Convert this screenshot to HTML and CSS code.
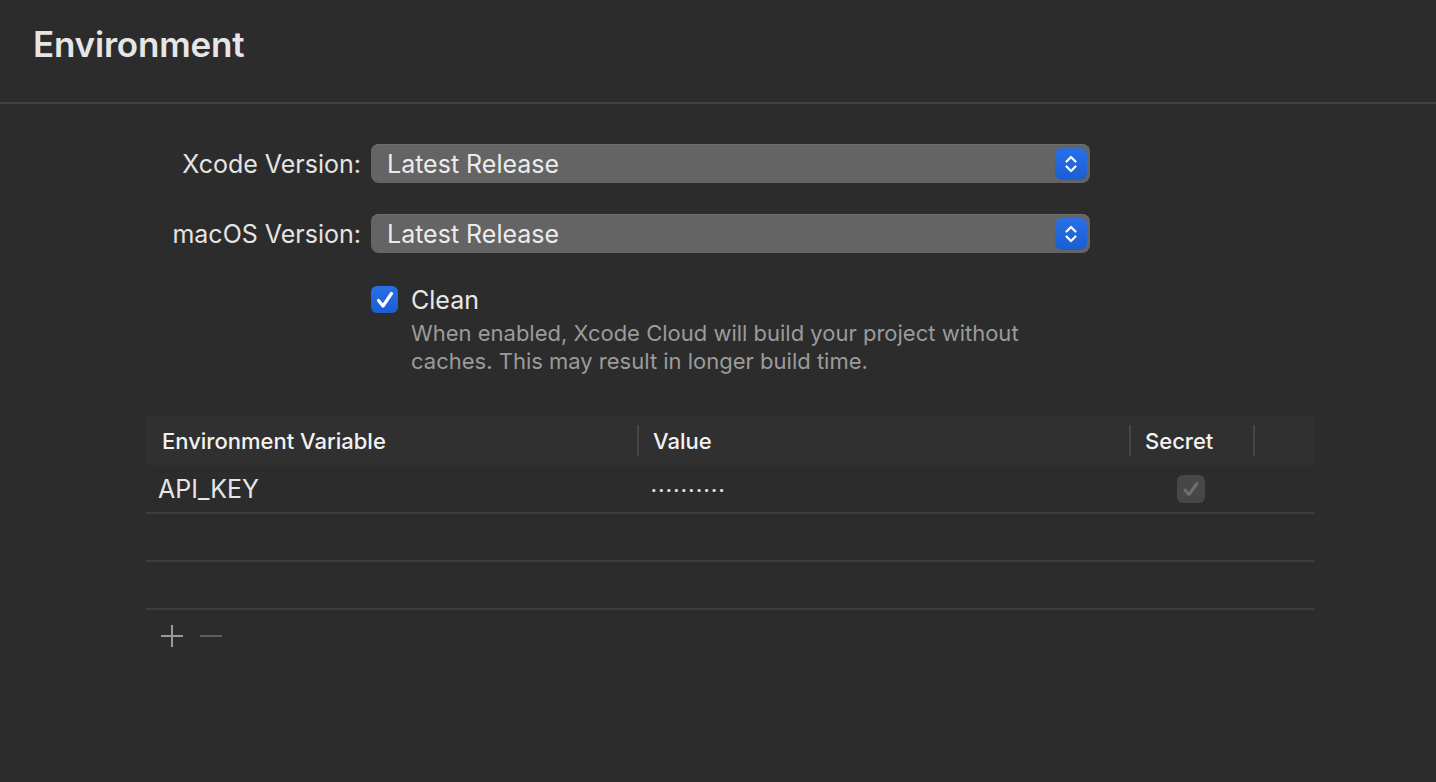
FILE: index.html
```html
<!DOCTYPE html>
<html lang="en">
<head>
  <meta charset="UTF-8" />
  <title>Environment</title>
  <link rel="stylesheet" href="styles.css">
</head>
<body>
  <!-- Header -->
  <div class="header">
    <h1>Environment</h1>
  </div>

  <!-- Version pickers -->
  <div class="form">
    <label class="form-label">Xcode Version:</label>
    <div class="popup">
      <span>Latest Release</span>
      <span class="stepper">
        <svg width="14" height="20" viewBox="0 0 14 20"><path d="M2.5 7.5 L7 3 L11.5 7.5 M2.5 12.5 L7 17 L11.5 12.5" fill="none" stroke="#fff" stroke-width="2.2" stroke-linecap="round" stroke-linejoin="round"/></svg>
      </span>
    </div>

    <label class="form-label">macOS Version:</label>
    <div class="popup">
      <span>Latest Release</span>
      <span class="stepper">
        <svg width="14" height="20" viewBox="0 0 14 20"><path d="M2.5 7.5 L7 3 L11.5 7.5 M2.5 12.5 L7 17 L11.5 12.5" fill="none" stroke="#fff" stroke-width="2.2" stroke-linecap="round" stroke-linejoin="round"/></svg>
      </span>
    </div>

    <div></div>
    <div class="option">
      <span class="checkbox">
        <svg width="22" height="22" viewBox="0 0 22 22"><path d="M4.5 11.5 L9 17 L17.5 4.5" fill="none" stroke="#fff" stroke-width="3.2" stroke-linecap="round" stroke-linejoin="round"/></svg>
      </span>
      <div>
        <div class="option-title">Clean</div>
        <p class="option-desc">When enabled, Xcode Cloud will build your project without<br>caches. This may result in longer build time.</p>
      </div>
    </div>
  </div>

  <!-- Variables table -->
  <div class="table">
    <div class="row head">
      <div class="cell c1">Environment Variable</div>
      <div class="cell c2">Value</div>
      <div class="cell c3">Secret</div>
      <div class="cell c4"></div>
    </div>
    <div class="row first">
      <div class="cell c1 name">API_KEY</div>
      <div class="cell c2 dots">••••••••••</div>
      <div class="cell c3 center">
        <span class="checkbox off">
          <svg width="22" height="22" viewBox="0 0 22 22"><path d="M5 12 L9 16.5 L17 5.5" fill="none" stroke="#6e6e6e" stroke-width="3" stroke-linecap="round" stroke-linejoin="round"/></svg>
        </span>
      </div>
      <div class="cell c4"></div>
    </div>
    <div class="row"></div>
    <div class="row"></div>
  </div>

  <div class="actions">
    <svg width="22" height="22" viewBox="0 0 22 22"><path d="M11 0 V22 M0 11 H22" stroke="#9a9a9a" stroke-width="2"/></svg>
    <svg width="22" height="22" viewBox="0 0 22 22"><path d="M0 11 H22" stroke="#5e5e5e" stroke-width="2"/></svg>
  </div>
</body>
</html>
```

FILE: styles.css
```css
* {
  box-sizing: border-box;
}
body {
  margin: 0;
  background: #2c2c2c;
  color: #e4e4e4;
  font-family: Inter, "Noto Sans", sans-serif;
  height: 100vh;
  overflow: hidden;
}
.header {
  height: 104px;
  padding: 23px 0 0 33px;
  border-bottom: 2px solid #404040;
}
.header h1 {
  margin: 0;
  font-size: 35px;
  font-weight: 600;
  color: #e6e6e6;
  letter-spacing: -0.2px;
}
.form {
  display: grid;
  grid-template-columns: 361px 719px;
  column-gap: 10px;
  row-gap: 31px;
  margin-top: 40px;
  align-items: center;
}
.form-label {
  text-align: right;
  font-size: 25px;
  color: #e4e4e4;
}
.popup {
  height: 39px;
  background: #646464;
  border-radius: 8px;
  display: flex;
  align-items: center;
  justify-content: space-between;
  padding: 0 3px 0 16px;
  font-size: 25px;
  color: #ececec;
  box-shadow: inset 0 1px 0 #6e6e6e;
}
.stepper {
  width: 32px;
  height: 32px;
  border-radius: 7px;
  background: linear-gradient(#2b6fe6, #1a5ed4);
  display: flex;
  align-items: center;
  justify-content: center;
}
.option {
  display: flex;
  gap: 13px;
  align-items: flex-start;
  margin-top: 2px;
}
.checkbox {
  flex: none;
  width: 27px;
  height: 27px;
  border-radius: 6px;
  background: linear-gradient(#2b6fe6, #1a5ed4);
  display: flex;
  align-items: center;
  justify-content: center;
}
.checkbox.off {
  width: 28px;
  height: 28px;
  background: #474747;
}
.option-title {
  font-size: 25px;
  line-height: 29px;
  color: #e8e8e8;
}
.option-desc {
  margin: 4px 0 0;
  font-size: 22px;
  line-height: 28px;
  color: #9b9b9b;
}
.table {
  margin: 41px 0 0 146px;
  width: 1169px;
}
.row {
  display: flex;
  height: 48px;
  border-bottom: 2px solid #3d3d3d;
}
.row.first {
  height: 49px;
}
.row.head {
  height: 49px;
  background: #303030;
  border-bottom: none;
}
.cell {
  display: flex;
  align-items: center;
  position: relative;
}
.head .cell {
  font-size: 22px;
  font-weight: 500;
  color: #f2f2f2;
  padding-left: 16px;
}
.head .c2::before,
.head .c3::before,
.head .c4::before {
  content: "";
  position: absolute;
  left: 0;
  top: 9px;
  bottom: 9px;
  width: 2px;
  background: #464646;
}
.c1 {
  width: 491px;
}
.c2 {
  width: 492px;
}
.c3 {
  width: 124px;
}
.c4 {
  width: 62px;
}
.name {
  padding-left: 12px;
  font-size: 25px;
  color: #e6e6e6;
}
.dots {
  padding-left: 14px;
  font-size: 10px;
  letter-spacing: 1.9px;
  color: #e0e0e0;
}
.center {
  justify-content: center;
}
.actions {
  display: flex;
  gap: 17px;
  margin: 15px 0 0 161px;
}
```
